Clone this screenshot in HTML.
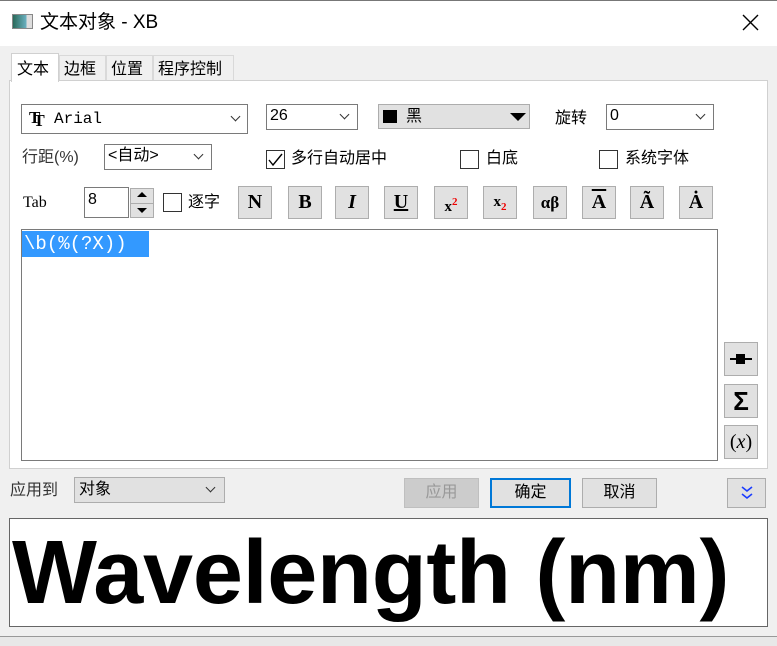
<!DOCTYPE html>
<html><head><meta charset="utf-8"><style>
*{box-sizing:border-box;margin:0;padding:0}
body{width:777px;height:646px;background:#f0f0f0;font-family:"Liberation Sans","Noto Sans CJK SC",sans-serif;font-size:15px;color:#000;position:relative;overflow:hidden;line-height:1.15}
.a{position:absolute}
.cb{position:absolute;width:19px;height:19px;border:1px solid #333;background:#fff}
.dd{position:absolute;border:1px solid #7a7a7a;background:#fff}
.chev{position:absolute;width:7px;height:7px;border-right:1px solid #333;border-bottom:1px solid #333;transform:rotate(45deg)}
.tb{position:absolute;top:186px;width:34px;height:33px;border:1px solid #adadad;background:#e1e1e1;font-family:"Liberation Serif",serif;font-weight:bold;font-size:20px;text-align:center;line-height:31px}
.sb{position:absolute;left:724px;width:34px;height:34px;border:1px solid #adadad;background:#e1e1e1;text-align:center;font-weight:bold}
.btn{position:absolute;top:478px;height:30px;border:1px solid #adadad;background:#e1e1e1;text-align:center;line-height:28px;font-size:16px}
</style></head><body>
<div class="a" style="left:0;top:0;width:777px;height:46px;background:#fff"></div>
<div class="a" style="left:0;top:0;width:777px;height:1px;background:#777"></div>
<div class="a" style="left:12px;top:14px;width:21px;height:15px;border:1px solid #888;background:linear-gradient(90deg,#2a6a5a,#6ab0c0 70%,#ddd 70%)"></div>
<div class="a" style="left:40px;top:12px;font-size:19px">文本对象 - XB</div>
<svg class="a" style="left:742px;top:14px" width="17" height="17"><path d="M1 1L16 16M16 1L1 16" stroke="#000" stroke-width="1.4"/></svg>
<!-- tabs -->
<div class="a" style="left:9px;top:80px;width:759px;height:389px;border:1px solid #d0d0d0;background:#fff"></div>
<div class="a" style="left:11px;top:53px;width:48px;height:29px;background:#fff;border:1px solid #d0d0d0;border-bottom:none;font-size:16px;padding:7px 0 0 5px">文本</div>
<div class="a" style="left:59px;top:55px;width:47px;height:25px;border:1px solid #d9d9d9;border-bottom:none;font-size:16px;padding:5px 0 0 4px">边框</div>
<div class="a" style="left:106px;top:55px;width:47px;height:25px;border:1px solid #d9d9d9;border-bottom:none;font-size:16px;padding:5px 0 0 4px">位置</div>
<div class="a" style="left:153px;top:55px;width:81px;height:25px;border:1px solid #d9d9d9;border-bottom:none;font-size:16px;padding:5px 0 0 4px">程序控制</div>
<!-- row1 -->
<div class="dd" style="left:21px;top:104px;width:227px;height:30px"></div>
<div class="a" style="left:29px;top:108px;font-family:'Liberation Serif',serif;font-weight:bold;font-size:17px">T<span style="margin-left:-7px;position:relative;top:3px">T</span></div>
<div class="a" style="left:54px;top:110px;font-family:'Liberation Mono',monospace;font-size:16px">Arial</div>
<div class="chev" style="left:232px;top:113px"></div>
<div class="dd" style="left:266px;top:104px;width:92px;height:26px"></div>
<div class="a" style="left:270px;top:107px;font-size:16px">26</div>
<div class="chev" style="left:341px;top:111px"></div>
<div class="a" style="left:378px;top:104px;width:152px;height:25px;border:1px solid #adadad;background:#e1e1e1"></div>
<div class="a" style="left:383px;top:110px;width:14px;height:13px;background:#000"></div>
<div class="a" style="left:406px;top:108px;font-size:16px">黑</div>
<div class="a" style="left:510px;top:113px;border-left:8px solid transparent;border-right:8px solid transparent;border-top:8px solid #000"></div>
<div class="a" style="left:555px;top:110px;font-size:16px">旋转</div>
<div class="dd" style="left:606px;top:104px;width:108px;height:26px"></div>
<div class="a" style="left:610px;top:107px;font-size:16px">0</div>
<div class="chev" style="left:697px;top:111px"></div>
<!-- row2 -->
<div class="a" style="left:22px;top:149px;font-size:16px;color:#333">行距(%)</div>
<div class="dd" style="left:104px;top:144px;width:108px;height:26px"></div>
<div class="a" style="left:108px;top:147px;font-size:16px">&lt;自动&gt;</div>
<div class="chev" style="left:195px;top:151px"></div>
<div class="cb" style="left:266px;top:150px"></div>
<svg class="a" style="left:268px;top:153px" width="15" height="14"><path d="M1 7L5 12L14 1" stroke="#000" stroke-width="1.4" fill="none"/></svg>
<div class="a" style="left:291px;top:150px;font-size:16px">多行自动居中</div>
<div class="cb" style="left:460px;top:150px"></div>
<div class="a" style="left:486px;top:150px;font-size:16px">白底</div>
<div class="cb" style="left:599px;top:150px"></div>
<div class="a" style="left:625px;top:150px;font-size:16px">系统字体</div>
<!-- row3 -->
<div class="a" style="left:23px;top:194px;font-family:'Liberation Serif',serif;font-size:16px">Tab</div>
<div class="a" style="left:84px;top:187px;width:45px;height:31px;border:1px solid #7a7a7a;background:#fff;padding:3px 0 0 3px;font-size:16px">8</div>
<div class="a" style="left:130px;top:188px;width:24px;height:30px;border:1px solid #adadad;background:#e1e1e1"></div>
<div class="a" style="left:137px;top:192px;border-left:5px solid transparent;border-right:5px solid transparent;border-bottom:5px solid #000"></div>
<div class="a" style="left:137px;top:208px;border-left:5px solid transparent;border-right:5px solid transparent;border-top:5px solid #000"></div>
<div class="a" style="left:130px;top:203px;width:24px;height:1px;background:#adadad"></div>
<div class="cb" style="left:163px;top:193px"></div>
<div class="a" style="left:188px;top:194px;font-size:16px">逐字</div>
<div class="tb" style="left:238px">N</div>
<div class="tb" style="left:288px">B</div>
<div class="tb" style="left:335px;font-style:italic">I</div>
<div class="tb" style="left:384px;text-decoration:underline">U</div>
<div class="tb" style="left:434px;font-size:15px">x<sup style="color:#e00;font-size:11px">2</sup></div>
<div class="tb" style="left:483px;font-size:15px">x<sub style="color:#e00;font-size:11px">2</sub></div>
<div class="tb" style="left:533px;font-size:17px">αβ</div>
<div class="tb" style="left:582px;text-decoration:overline">A</div>
<div class="tb" style="left:630px">Ã</div>
<div class="tb" style="left:679px">Ȧ</div>
<!-- editor -->
<div class="a" style="left:21px;top:229px;width:697px;height:232px;border:1px solid #7a7a7a;background:#fff"></div>
<div class="a" style="left:22px;top:231px;width:127px;height:26px;background:#3399ff;color:#fff;font-family:'Liberation Mono',monospace;font-size:19px;line-height:26px;padding-left:2px">\b(%(?X))</div>
<div class="sb" style="left:724px;top:342px"><div class="a" style="left:5px;top:15px;width:22px;height:2px;background:#000"></div><div class="a" style="left:11px;top:11px;width:9px;height:10px;background:#000"></div></div>
<div class="sb" style="top:384px;font-size:26px;line-height:32px">Σ</div>
<div class="sb" style="top:425px;font-family:'Liberation Serif',serif;font-weight:normal;font-size:20px;line-height:32px">(<i>x</i>)</div>
<!-- bottom -->
<div class="a" style="left:10px;top:482px;font-size:16px;color:#333">应用到</div>
<div class="a" style="left:74px;top:477px;width:151px;height:26px;border:1px solid #adadad;background:#e1e1e1;padding:3px 0 0 4px;font-size:16px">对象</div>
<div class="chev" style="left:207px;top:484px"></div>
<div class="btn" style="left:404px;width:75px;color:#999;background:#ccc;border-color:#bfbfbf">应用</div>
<div class="btn" style="left:490px;width:81px;border:2px solid #0078d7;line-height:26px">确定</div>
<div class="btn" style="left:582px;width:75px">取消</div>
<div class="btn" style="left:727px;width:39px"><svg class="a" style="left:13px;top:6px" width="12" height="16"><path d="M1 2L6 6L11 2M1 9L6 13L11 9" stroke="#1a3cff" stroke-width="1.6" fill="none"/></svg></div>
<div class="a" style="left:9px;top:518px;width:759px;height:109px;border:1px solid #666;background:#fff;overflow:hidden"></div>
<div class="a" style="left:12px;top:518px;font-weight:bold;font-size:90px;line-height:110px;white-space:nowrap;letter-spacing:-0.3px">Wavelength (nm)</div>
<div class="a" style="left:0;top:636px;width:777px;height:1px;background:#999"></div>
<div class="a" style="left:0;top:637px;width:777px;height:9px;background:#e8e8e8"></div>
</body></html>
